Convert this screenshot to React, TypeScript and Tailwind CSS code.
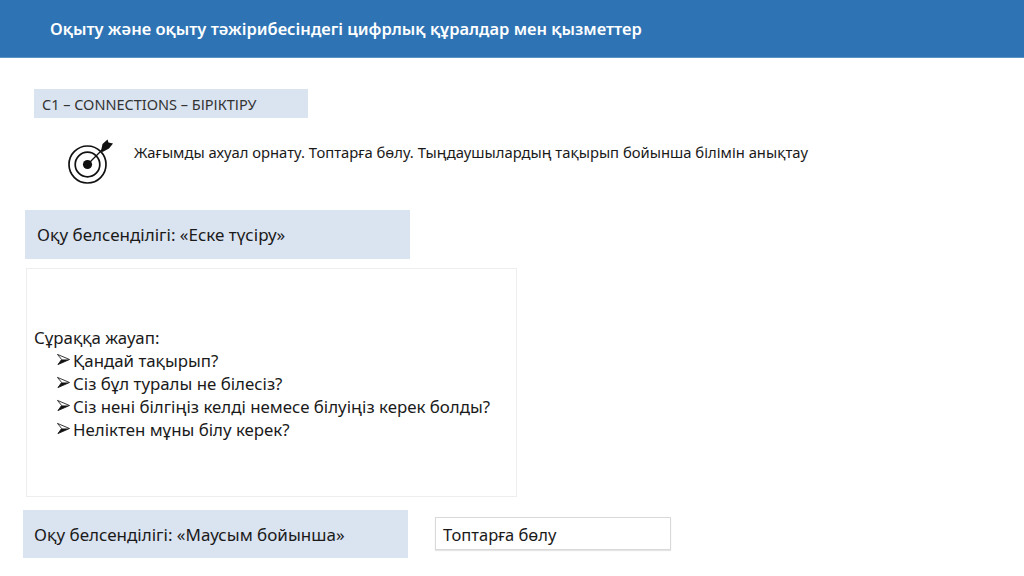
const bodyFont = "[font-family:'Noto_Sans','Open_Sans',sans-serif]";

const questions = [
  "Қандай тақырып?",
  "Сіз бұл туралы не білесіз?",
  "Сіз нені білгіңіз келді немесе білуіңіз керек болды?",
  "Неліктен мұны білу керек?",
];

function TargetIcon() {
  return (
    <svg viewBox="0 0 46 46" className="h-[46px] w-[46px] shrink-0" fill="none" stroke="#111">
      <circle cx="20.5" cy="25.5" r="18.5" strokeWidth="1.7" />
      <circle cx="20.5" cy="25.5" r="12.3" strokeWidth="1.7" />
      <circle cx="20.5" cy="25.5" r="4.6" fill="#111" stroke="none" />
      <path d="M20.5 25.5 L36 10" strokeWidth="1.2" />
      <path d="M34 12 L35.5 5 L40.5 0.5 L41.5 3.5 L46 4.5 L42 9.5 L35.5 13 Z" fill="#111" stroke="none" />
    </svg>
  );
}

function ArrowBullet() {
  return (
    <svg viewBox="0 0 14 12" className="mr-[3px] -mt-[3px] h-[13px] w-[13px] shrink-0" fill="#111">
      <path d="M0.5 0.5 L13.5 6 L1 11.5 L5 6 Z" fill="none" stroke="#111" strokeWidth="0.9" />
      <path d="M1 11.5 L13.5 6 L5 6 Z" />
    </svg>
  );
}

export default function App() {
  return (
    <div className={`flex h-[576px] w-[1024px] flex-col overflow-hidden bg-white text-[#1a1a1a] ${bodyFont}`}>
      <header className="flex h-[58px] items-center border-b border-[#5b93c7] bg-[#2e74b5] pl-[50px] pt-[2px]">
        <h1 className="text-[16.5px] font-semibold text-white">
          Оқыту және оқыту тәжірибесіндегі цифрлық құралдар мен қызметтер
        </h1>
      </header>

      <div className="ml-[34px] mt-[31px] flex h-[29px] w-[274px] items-center bg-[#dae3f0] pl-2 pt-[2px] text-[14.5px] text-[#333]">
        C1 – CONNECTIONS – БІРІКТІРУ
      </div>

      <div className="ml-[67px] mt-[21px] flex h-[46px] items-start gap-[21px]">
        <TargetIcon />
        <p className="mt-[2px] whitespace-nowrap text-[14.8px]">
          Жағымды ахуал орнату. Топтарға бөлу. Тыңдаушылардың тақырып бойынша білімін анықтау
        </p>
      </div>

      <div className="ml-[25px] mt-[25px] flex h-[49px] w-[385px] items-center bg-[#dae3f0] pl-3 text-[17px]">
        Оқу белсенділігі: «Еске түсіру»
      </div>

      <div className="ml-[26px] mt-[9px] flex h-[229px] w-[491px] flex-col justify-center border border-[#eeeeee] pl-[7px] pt-[2px] text-[16.85px] leading-[23px]">
        <div>Сұраққа жауап:</div>
        <ul className="pl-[23px]">
          {questions.map((q) => (
            <li key={q} className="flex items-center">
              <ArrowBullet />
              {q}
            </li>
          ))}
        </ul>
      </div>

      <div className="ml-[23px] mt-[13px] flex items-center gap-[27px]">
        <div className="flex h-[48px] w-[385px] items-center bg-[#dae3f0] pl-[11px] pt-[2px] text-[17px]">
          Оқу белсенділігі: «Маусым бойынша»
        </div>
        <div className="mb-[2px] flex h-[33px] w-[236px] items-center border border-[#d9d9d9] pl-[7px] pt-[4px] text-[16.5px] shadow-[0_1px_1px_#e5e5e5]">
          Топтарға бөлу
        </div>
      </div>
    </div>
  );
}
